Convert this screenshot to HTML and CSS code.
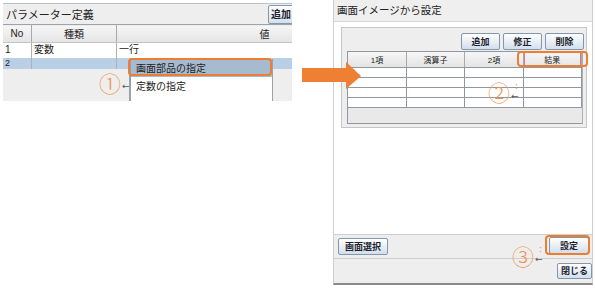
FILE: index.html
```html
<!DOCTYPE html>
<html lang="ja">

<head>
    <meta charset="UTF-8">
    <title>画面イメージから設定</title>
    <link rel="stylesheet" href="styles.css">
</head>

<body>
    <div class="page">
        <!-- left: parameter definition -->
        <div class="param">
            <div class="param-title">
                <span>パラメーター定義</span>
                <button class="btn btn-cut">追加</button>
            </div>
            <table class="grid param-grid">
                <tr class="head">
                    <th class="c-no">No</th>
                    <th class="c-kind">種類</th>
                    <th class="c-val">値</th>
                </tr>
                <tr class="row1">
                    <td>1</td>
                    <td>変数</td>
                    <td>一行</td>
                </tr>
                <tr class="row2">
                    <td>2</td>
                    <td></td>
                    <td></td>
                </tr>
            </table>
            <ul class="menu">
                <li class="menu-item active">画面部品の指定</li>
                <li class="menu-item">定数の指定</li>
            </ul>
        </div>

        <!-- right: dialog -->
        <div class="dialog">
            <div class="dialog-title">画面イメージから設定</div>
            <div class="dialog-body">
                <div class="calc">
                    <div class="calc-buttons">
                        <button class="btn">追加</button>
                        <button class="btn">修正</button>
                        <button class="btn">削除</button>
                    </div>
                    <div class="calc-table">
                        <table class="grid calc-grid">
                            <tr class="head">
                                <th>1項</th>
                                <th>演算子</th>
                                <th>2項</th>
                                <th class="picked">結果</th>
                            </tr>
                            <tr><td></td><td></td><td></td><td></td></tr>
                            <tr><td></td><td></td><td></td><td></td></tr>
                            <tr><td></td><td></td><td></td><td></td></tr>
                            <tr><td></td><td></td><td></td><td></td></tr>
                        </table>
                    </div>
                </div>
            </div>
            <div class="bar">
                <button class="btn">画面選択</button>
                <button class="btn btn-set">設定</button>
            </div>
            <div class="bar bar-last">
                <button class="btn">閉じる</button>
            </div>
        </div>

        <!-- annotations -->
        <svg class="big-arrow" width="59" height="27" viewBox="0 0 59 27">
            <polygon points="0,6 44,6 44,0 59,14 44,27 44,20 0,20" fill="#ef7f33" />
        </svg>
        <div class="mark mark-menu"></div>
        <div class="mark mark-result"></div>
        <div class="mark mark-set"></div>
        <span class="num num-1">①</span>
        <span class="num num-2">②</span>
        <span class="num num-3">③</span>
        <span class="cursor cursor-1">←</span>
        <span class="cursor cursor-2"><i>:</i>←</span>
        <span class="cursor cursor-3"><i>:</i>←</span>
    </div>
</body>
</html>
```

FILE: styles.css
```css
body {
    margin: 0;
    background-color: #fff;
    font-family: "Noto Sans CJK JP", "DejaVu Sans", sans-serif;
    color: #222;
}

.page {
    position: relative;
    display: flex;
    align-items: flex-start;
    width: 595px;
    height: 292px;
    overflow: hidden;
}

/* buttons */
.btn {
    font-family: inherit;
    font-size: 9px;
    font-weight: bold;
    color: #1d2430;
    height: 17px;
    padding: 0 6px;
    line-height: 14px;
    border: 1px solid #8296ac;
    border-radius: 2px;
    background: linear-gradient(#ffffff, #d3dfec);
}

/* left panel */
.param {
    position: relative;
    margin: 3px 0 0 3px;
    width: 289px;
    height: 97px;
    background-color: #eeeeee;
    border-top: 1px solid #b9c3cd;
    overflow: hidden;
}

.param-title {
    display: flex;
    justify-content: space-between;
    align-items: center;
    height: 20px;
    padding-left: 3px;
    font-size: 11px;
}

.btn-cut {
    width: 28px;
    height: 19px;
    margin-right: -4px;
    padding: 0 2px;
    font-size: 10px;
    text-align: left;
}

.grid {
    border-collapse: collapse;
    table-layout: fixed;
    font-size: 10px;
    font-family: "Liberation Sans", "Noto Sans CJK JP", sans-serif;
}

.grid th {
    font-weight: normal;
    background: linear-gradient(#f6f6f6, #e4e4e4);
    border-right: 1px solid #a8a8a8;
    border-bottom: 1px solid #c4c4c4;
}

.param-grid {
    width: 410px;
    border-top: 1px solid #9aa4ae;
}

.param-grid .head {
    height: 16px;
}

.param-grid td {
    padding: 0 2px;
    border-right: 1px solid #b0b0b0;
    line-height: 10px;
}

.c-no {
    width: 26px;
}

.c-kind {
    width: 82px;
}

.row1 {
    height: 15px;
    background-color: #fff;
}

.row2 {
    height: 11px;
    background-color: #b9cfe5;
}

.row2 td {
    font-size: 9px;
    line-height: 10px;
    vertical-align: top;
}

.menu {
    position: absolute;
    left: 126px;
    top: 55px;
    width: 141px;
    height: 60px;
    margin: 0;
    padding: 0;
    list-style: none;
    background-color: #fff;
    border-left: 2px solid #9aa0a8;
    border-right: 1px solid #a0a0a0;
    font-size: 10px;
}

.menu-item {
    height: 18px;
    line-height: 18px;
    padding-left: 5px;
}

.menu-item.active {
    background-color: #a7bbd0;
}

/* right dialog */
.dialog {
    display: flex;
    flex-direction: column;
    margin-left: 41px;
    width: 260px;
    height: 285px;
    box-sizing: border-box;
    border-left: 1px solid #cfcfcf;
    border-right: 1px solid #cfcfcf;
    border-bottom: 2px solid #8a8a8a;
}

.dialog-title {
    height: 21px;
    line-height: 20px;
    padding-left: 3px;
    background-color: #efefef;
    border-bottom: 1px solid #d6d6d6;
    font-size: 10.5px;
}

.dialog-body {
    flex: 1;
    padding: 5px 0 0 7px;
    background-color: #fff;
}

.calc {
    width: 246px;
    height: 101px;
    box-sizing: border-box;
    border: 1px solid #c6c6c6;
    background-color: #eeeeee;
}

.calc-buttons {
    display: flex;
    justify-content: flex-end;
    gap: 3px;
    padding: 5px 2px 0 0;
}

.calc-buttons .btn {
    width: 39px;
}

.calc-table {
    width: 236px;
    height: 73px;
    margin: 1px 0 0 5px;
    box-sizing: border-box;
    border: 1px solid #8f98a2;
    border-right-color: #b0b0b0;
    background-color: #e9e9e9;
}

.calc-grid {
    width: 234px;
    font-size: 8px;
}

.calc-grid .head {
    height: 15px;
}

.calc-grid th {
    border-bottom: 1px solid #8f98a2;
}

.calc-grid td {
    height: 9px;
    padding: 0;
    background-color: #fff;
    border-right: 1px solid #8f98a2;
    border-bottom: 1px solid #8f98a2;
}

.calc-grid th.picked {
    box-shadow: inset 0 0 0 1px #d77a86;
}

.bar {
    display: flex;
    justify-content: space-between;
    align-items: center;
    height: 23px;
    padding: 0 3px 0 4px;
    background-color: #eeeeee;
    border-top: 1px solid #cfcfcf;
}

.btn-set {
    width: 40px;
    margin-top: -2px;
}

.bar-last {
    justify-content: flex-end;
    height: 24px;
    padding-right: 0;
}

.bar-last .btn {
    height: 16px;
    padding: 0 3px;
}

/* annotations */
.big-arrow {
    position: absolute;
    left: 302px;
    top: 62px;
}

.mark {
    position: absolute;
    border: 2.5px solid #ed7d31;
    border-radius: 4px;
}

.mark-menu {
    left: 128px;
    top: 58px;
    width: 140px;
    height: 14px;
}

.mark-result {
    left: 517px;
    top: 51px;
    width: 67px;
    height: 12px;
}

.mark-set {
    left: 545px;
    top: 235px;
    width: 41px;
    height: 16px;
}

.num {
    position: absolute;
    font-size: 22px;
    line-height: 22px;
    color: #f0914a;
    font-family: "Noto Sans CJK JP", sans-serif;
    font-weight: 300;
}

.num-1 {
    left: 99px;
    top: 71px;
}

.num-2 {
    left: 488px;
    top: 80px;
}

.num-3 {
    left: 512px;
    top: 244px;
}

.cursor {
    position: absolute;
    font-size: 9px;
    line-height: 9px;
    color: #555;
    font-family: "DejaVu Sans", sans-serif;
}

.cursor i {
    position: absolute;
    left: 4px;
    top: -10px;
    font-style: normal;
    color: #f08a3c;
}

.cursor-1 {
    left: 122px;
    top: 82px;
}

.cursor-2 {
    left: 511px;
    top: 92px;
}

.cursor-3 {
    left: 535px;
    top: 255px;
}
```
